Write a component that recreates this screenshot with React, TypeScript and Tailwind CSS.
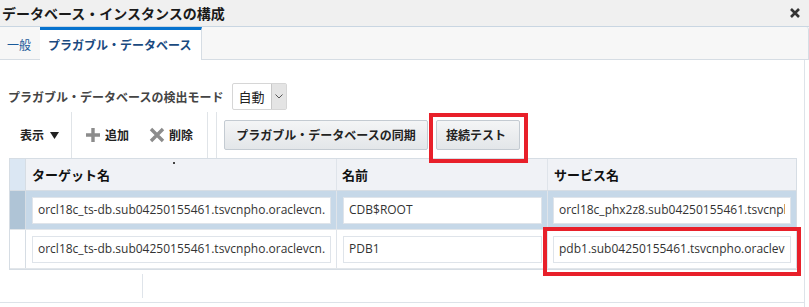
import React from 'react';

const jp = { fontFamily: '"Noto Sans CJK JP", "Noto Sans", sans-serif' };
const latin = { fontFamily: '"Open Sans", "Noto Sans CJK JP", sans-serif' };

const rows = [
  {
    target: 'orcl18c_ts-db.sub04250155461.tsvcnpho.oraclevcn.com',
    name: 'CDB$ROOT',
    service: 'orcl18c_phx2z8.sub04250155461.tsvcnpho.oraclevcn.com',
    selected: true,
  },
  {
    target: 'orcl18c_ts-db.sub04250155461.tsvcnpho.oraclevcn.com',
    name: 'PDB1',
    service: 'pdb1.sub04250155461.tsvcnpho.oraclevcn.com',
    selected: false,
  },
];

const Cell: React.FC<{ value: string; width: string }> = ({ value, width }) => (
  <div className={`${width} h-[27px] bg-white border border-[#dfe4ea] px-[5px] overflow-hidden`}>
    <div className="h-full flex items-center whitespace-nowrap overflow-hidden text-[12px] text-[#333]" style={latin}>
      {value}
    </div>
  </div>
);

const App: React.FC = () => {
  return (
    <div className="relative w-[809px] h-[307px] bg-white overflow-hidden" style={jp}>
      {/* Title bar */}
      <div className="h-[27px] bg-[#f0f0f0] border-b border-[#c9d6e2] flex items-center justify-between pl-[2px] pr-[8px]">
        <span className="text-[14px] font-bold text-[#1a1a1a] leading-none">データベース・インスタンスの構成</span>
        <svg width="12" height="12" viewBox="0 0 12 12">
          <path d="M2 2 L10 10 M10 2 L2 10" stroke="#333" strokeWidth="2.6" />
        </svg>
      </div>

      {/* Tabs */}
      <div className="h-[33px] bg-[#f7f7f7] flex items-end">
        <div className="w-[40px] h-[33px] flex items-center pl-[7px] text-[12px] text-[#1a5a9a] border-b border-[#d6dde4] pt-[3px]">
          一般
        </div>
        <div className="w-[162px] h-[33px] bg-white border-t-[3px] border-[#0572ce] border-r border-r-[#d6dde4] flex items-center pl-[8px] text-[12px] text-[#1a4a80] font-bold">
          プラガブル・データベース
        </div>
        <div className="flex-1 h-[33px] border-b border-[#d6dde4] border-r border-r-[#d6dde4] rounded-tr-[3px]" />
      </div>

      {/* Content */}
      <div className="h-[247px] border-r border-[#dde3e9] mr-[4px] flex flex-col">
        {/* Detection mode */}
        <div className="h-[50px] flex items-center pl-[8px] pt-[23px]">
          <span className="text-[12px] font-bold text-[#444]">プラガブル・データベースの検出モード</span>
          <div className="ml-[9px] h-[27px] w-[55px] flex border border-[#d6d6d6] rounded-[2px] bg-white">
            <span className="flex-1 flex items-center pl-[5px] text-[13px] text-[#222]">自動</span>
            <span className="w-[15px] bg-[#e4e4e4] border-l border-[#c8c8c8] flex items-center justify-center">
              <svg width="8" height="5" viewBox="0 0 8 5">
                <path d="M0.5 0.5 L4 4 L7.5 0.5" fill="none" stroke="#555" strokeWidth="1" />
              </svg>
            </span>
          </div>
        </div>

        {/* Toolbar */}
        <div className="h-[46px] flex items-center pl-[9px] mt-[2px]">
          <div className="h-[46px] flex items-center pl-[11px] pr-[12px] border-r border-[#e0e4e8] text-[12px] font-bold text-[#222]">
            表示
            <svg className="ml-[6px]" width="9" height="7" viewBox="0 0 9 7">
              <path d="M0 0 H9 L4.5 7 Z" fill="#222" />
            </svg>
          </div>
          <div className="h-[46px] flex items-center pl-[13px] text-[12px] font-bold text-[#222]">
            <svg width="16" height="16" viewBox="0 0 16 16">
              <path d="M6.3 1 H9.7 V6.3 H15 V9.7 H9.7 V15 H6.3 V9.7 H1 V6.3 H6.3 Z" fill="#8c8c8c" />
            </svg>
            <span className="ml-[4px]">追加</span>
          </div>
          <div className="h-[46px] flex items-center pl-[20px] pr-[14px] border-r border-[#e0e4e8] text-[12px] font-bold text-[#222]">
            <svg width="16" height="16" viewBox="0 0 16 16">
              <path d="M2 2 L14 14 M14 2 L2 14" stroke="#8c8c8c" strokeWidth="3.4" />
            </svg>
            <span className="ml-[4px]">削除</span>
          </div>
          <div className="w-[9px] h-[46px] border-r border-[#e0e4e8]" />
          <div className="ml-[7px] h-[30px] w-[204px] flex items-center justify-center bg-gradient-to-b from-[#f4f5f6] to-[#e3e6e9] border border-[#c4cbd2] rounded-[2px] text-[12px] font-bold text-[#222]">
            プラガブル・データベースの同期
          </div>
          <div className="ml-[8px] h-[30px] w-[84px] pl-[9px] flex items-center bg-gradient-to-b from-[#f4f5f6] to-[#e3e6e9] border border-[#c4cbd2] rounded-[2px] text-[12px] font-bold text-[#222]">
            接続テスト
          </div>
        </div>

        {/* Table */}
        <div className="ml-[9px] w-[788px] border border-[#d6dde4] border-r-0">
          <div className="h-[32px] flex bg-[#f0f2f6] border-b border-[#d6dde4]">
            <div className="w-[16px] bg-[#dbe7f3] border-r border-[#d6dde4]" />
            <div className="w-[311px] flex items-center pl-[6px] border-r border-[#dfe4ea] text-[13px] font-bold text-[#111]">
              ターゲット名
            </div>
            <div className="w-[211px] flex items-center pl-[5px] border-r border-[#dfe4ea] text-[13px] font-bold text-[#111]">
              名前
            </div>
            <div className="flex-1 flex items-center pl-[6px] text-[13px] font-bold text-[#111] border-r border-[#d6dde4]">
              サービス名
            </div>
          </div>
          {rows.map((r, i) => (
            <div
              key={i}
              className={`h-[39px] flex ${r.selected ? 'bg-[#c6d8e8]' : 'bg-white'} border-b border-[#e2e6ea]`}
            >
              <div className={`w-[16px] ${r.selected ? 'bg-[#afc4d6]' : 'bg-white'} border-r border-[#d6dde4]`} />
              <div className="w-[311px] flex items-center pl-[6px] border-r border-[#dfe4ea]">
                <Cell value={r.target} width="w-[299px]" />
              </div>
              <div className="w-[211px] flex items-center pl-[6px] border-r border-[#dfe4ea]">
                <Cell value={r.name} width="w-[199px]" />
              </div>
              <div className="flex-1 flex items-center pl-[5px] pr-[5px] border-r border-[#d6dde4]">
                <Cell value={r.service} width="w-[238px]" />
              </div>
            </div>
          ))}
        </div>

        {/* Empty area below table */}
        <div className="flex-1 flex">
          <div className="w-[142px]" />
          <div className="mt-[4px] mb-[4px] border-l border-[#dfe4ea]" />
        </div>
        <div className="h-[1px] bg-[#dde3e9] mb-[4px]" />
      </div>

      {/* tiny artifact dot */}
      <div className="absolute left-[173px] top-[162px] w-[2px] h-[2px] bg-[#444]" />

      {/* Annotation red boxes */}
      <div className="absolute left-[429px] top-[113px] w-[99px] h-[50px] border-[4px] border-[#e8202a]" />
      <div className="absolute left-[543px] top-[227px] w-[258px] h-[49px] border-[4px] border-[#e8202a]" />
    </div>
  );
};

export default App;
